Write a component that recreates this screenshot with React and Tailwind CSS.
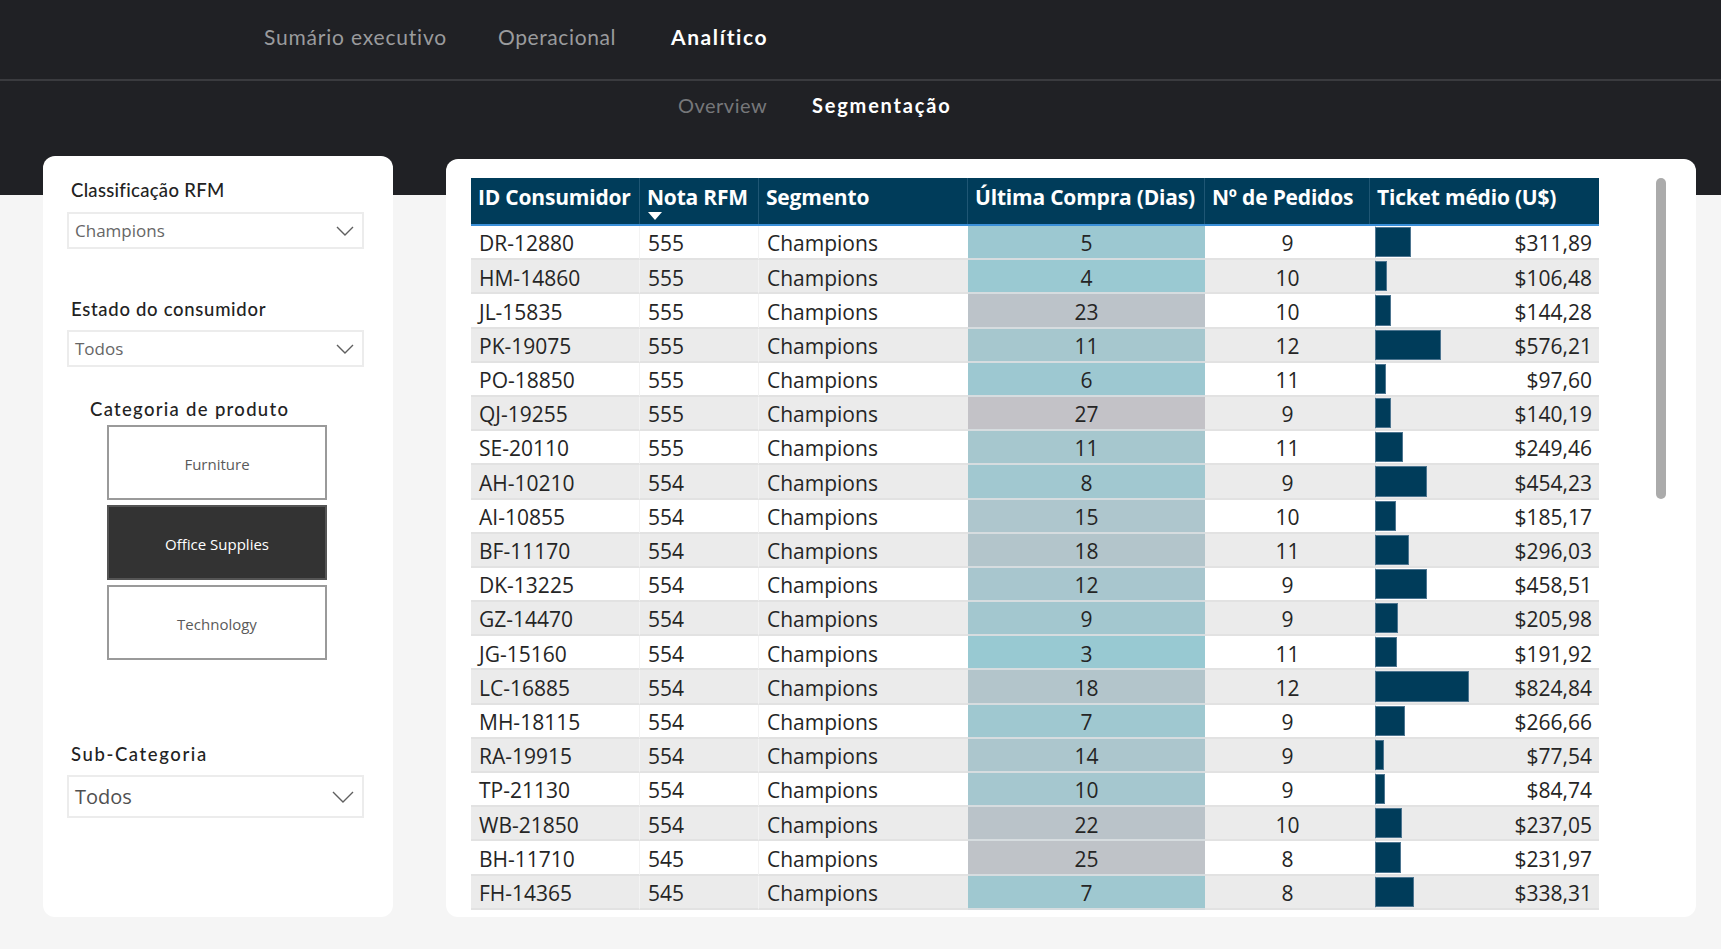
import React from 'react';

const rows = [
  ['DR-12880', '555', 5, 9, 311.89],
  ['HM-14860', '555', 4, 10, 106.48],
  ['JL-15835', '555', 23, 10, 144.28],
  ['PK-19075', '555', 11, 12, 576.21],
  ['PO-18850', '555', 6, 11, 97.6],
  ['QJ-19255', '555', 27, 9, 140.19],
  ['SE-20110', '555', 11, 11, 249.46],
  ['AH-10210', '554', 8, 9, 454.23],
  ['AI-10855', '554', 15, 10, 185.17],
  ['BF-11170', '554', 18, 11, 296.03],
  ['DK-13225', '554', 12, 9, 458.51],
  ['GZ-14470', '554', 9, 9, 205.98],
  ['JG-15160', '554', 3, 11, 191.92],
  ['LC-16885', '554', 18, 12, 824.84],
  ['MH-18115', '554', 7, 9, 266.66],
  ['RA-19915', '554', 14, 9, 77.54],
  ['TP-21130', '554', 10, 9, 84.74],
  ['WB-21850', '554', 22, 10, 237.05],
  ['BH-11710', '545', 25, 8, 231.97],
  ['FH-14365', '545', 7, 8, 338.31],
];

// escala de cor da coluna "Última Compra" (teal -> cinza)
const lerp = (a, b, t) => Math.round(a + (b - a) * t);
const dayColor = (d) => {
  const t = Math.min(Math.max((d - 3) / 24, 0), 1);
  return `rgb(${lerp(152, 195, t)}, ${lerp(201, 194, t)}, ${lerp(210, 199, t)})`;
};

const money = (v) => '$' + v.toFixed(2).replace('.', ',');

const Chevron = ({ w = 18, h = 10 }) => (
  <svg width={w} height={h} viewBox={`0 0 ${w} ${h}`} fill="none">
    <path d={`M1 1 L${w / 2} ${h - 1} L${w - 1} 1`} stroke="#5f5f5f" strokeWidth="1.4" />
  </svg>
);

const Dropdown = ({ value, big }) => (
  <div
    className={`ml-[24px] w-[297px] ${big ? 'h-[43px]' : 'h-[37px]'} border-2 border-[#ececec] flex items-center justify-between pl-[6px] pr-[8px]`}
  >
    <span
      className={`font-['Open_Sans',sans-serif] ${big ? 'text-[20px] text-[#505050]' : 'text-[17px] text-[#666666]'}`}
    >
      {value}
    </span>
    {big ? <Chevron w={22} h={12} /> : <Chevron />}
  </div>
);

const Label = ({ children, className = '' }) => (
  <div
    className={`h-[24px] leading-[24px] text-[18.5px] font-medium text-[#222222] font-['Lato',sans-serif] ${className}`}
  >
    {children}
  </div>
);

const CatButton = ({ children, active }) => (
  <div
    className={`w-[220px] h-[75px] border-2 flex items-center justify-center pt-[3px] font-['Open_Sans',sans-serif] text-[15px] ${
      active ? 'bg-[#333333] border-[#555555] text-white' : 'bg-white border-[#9a9a9a] text-[#5a5a5a]'
    }`}
  >
    {children}
  </div>
);

const cols = [
  { label: 'ID Consumidor', w: 'w-[169px]' },
  { label: 'Nota RFM', w: 'w-[119px]', sort: true },
  { label: 'Segmento', w: 'w-[209px]' },
  { label: 'Última Compra (Dias)', w: 'w-[237px]' },
  { label: 'Nº de Pedidos', w: 'w-[165px]' },
  { label: 'Ticket médio (U$)', w: 'w-[229px]' },
];

const App = () => {
  return (
    <div className="w-full h-[949px] overflow-hidden bg-[linear-gradient(to_bottom,#202125_195px,#f5f5f5_195px)]">
      {/* nav principal */}
      <div className="h-[79px] flex items-center pb-[6px] pl-[264px] font-['Lato',sans-serif] text-[21px]">
        <div className="w-[234px] text-[#9a9b9d] tracking-[0.8px]">Sumário executivo</div>
        <div className="w-[173px] text-[#9a9b9d] tracking-[0.6px]">Operacional</div>
        <div className="text-white font-bold tracking-[1.6px]">Analítico</div>
      </div>
      <div className="h-[2px] bg-[#3a3b3f]" />
      <div className="h-[48px] flex items-center pl-[678px] font-['Lato',sans-serif] text-[20px]">
        <div className="w-[134px] text-[#76777a] tracking-[0.5px]">Overview</div>
        <div className="text-white font-bold tracking-[1.8px]">Segmentação</div>
      </div>

      <div className="flex items-start mt-[27px] pl-[43px] gap-[53px]">
        {/* filtros */}
        <div className="w-[350px] h-[761px] bg-white rounded-[12px] pt-[22px] flex flex-col">
          <Label className="ml-[28px] tracking-[0.3px]">Classificação RFM</Label>
          <div className="mt-[10px]">
            <Dropdown value="Champions" />
          </div>
          <Label className="ml-[28px] mt-[48px] tracking-[0.7px]">Estado do consumidor</Label>
          <div className="mt-[9px]">
            <Dropdown value="Todos" />
          </div>
          <Label className="ml-[47px] mt-[30px] tracking-[1.3px]">Categoria de produto</Label>
          <div className="ml-[64px] mt-[4px] flex flex-col gap-[5px]">
            <CatButton>Furniture</CatButton>
            <CatButton active>Office Supplies</CatButton>
            <CatButton>Technology</CatButton>
          </div>
          <Label className="ml-[28px] mt-[82px] tracking-[1.6px]">Sub-Categoria</Label>
          <div className="mt-[9px]">
            <Dropdown value="Todos" big />
          </div>
        </div>

        {/* tabela */}
        <div className="mt-[3px] w-[1250px] h-[758px] bg-white rounded-[12px] pl-[25px] pt-[19px] flex items-start">
          <div className="w-[1128px] font-['Open_Sans',sans-serif]">
            <div className="flex h-[48px] bg-[#003c5a] border-b-2 border-[#3a8fd8] text-white font-bold text-[21px]">
              {cols.map((c, i) => (
                <div
                  key={c.label}
                  className={`${c.w} pl-[7px] pt-[5px] flex flex-col whitespace-nowrap ${
                    i < cols.length - 1 ? 'border-r border-[#1f5674]' : ''
                  }`}
                >
                  <span className="leading-[28px] tracking-[-0.2px]">{c.label}</span>
                  {c.sort && (
                    <svg width="14" height="8" viewBox="0 0 14 8" className="ml-[1px] mt-[1px]">
                      <path d="M0 0 L14 0 L7 8 Z" fill="#ffffff" />
                    </svg>
                  )}
                </div>
              ))}
            </div>

            {rows.map(([id, nota, dias, pedidos, ticket], i) => (
              <div
                key={id}
                className={`flex h-[34.2px] text-[21px] text-[#252525] ${i % 2 ? 'bg-[#ebebeb]' : 'bg-white'}`}
              >
                <div className="w-[169px] pl-[8px] pt-[4px] flex items-center border-b-2 border-[#e2e2e2] border-r border-r-[#f3f3f3]">
                  {id}
                </div>
                <div className="w-[119px] pl-[8px] pt-[4px] flex items-center border-b-2 border-[#e2e2e2] border-r border-r-[#f3f3f3]">
                  {nota}
                </div>
                <div className="w-[209px] pl-[8px] pt-[4px] flex items-center border-b-2 border-[#e2e2e2]">Champions</div>
                <div
                  className="w-[237px] pt-[4px] flex items-center justify-center border-b-2 border-[#d6dcdf]"
                  style={{ backgroundColor: dayColor(dias) }}
                >
                  {dias}
                </div>
                <div className="w-[165px] pt-[4px] flex items-center justify-center border-b-2 border-[#e2e2e2]">
                  {pedidos}
                </div>
                <div className="w-[229px] pt-[4px] relative flex items-center justify-end pr-[7px] border-b-2 border-[#e2e2e2]">
                  <div className="absolute left-[5px] top-0 bottom-0 w-px bg-[#c8d2d8]" />
                  <div
                    className="absolute left-[5px] top-[1px] bottom-[1px] bg-[#003c5a] border border-[#4d7590]"
                    style={{ width: `${(ticket / 824.84) * 94}px` }}
                  />
                  <span>{money(ticket)}</span>
                </div>
              </div>
            ))}
          </div>
          <div className="ml-[57px] w-[10px] h-[321px] rounded-full bg-[#ababab]" />
        </div>
      </div>
    </div>
  );
};

export default App;
